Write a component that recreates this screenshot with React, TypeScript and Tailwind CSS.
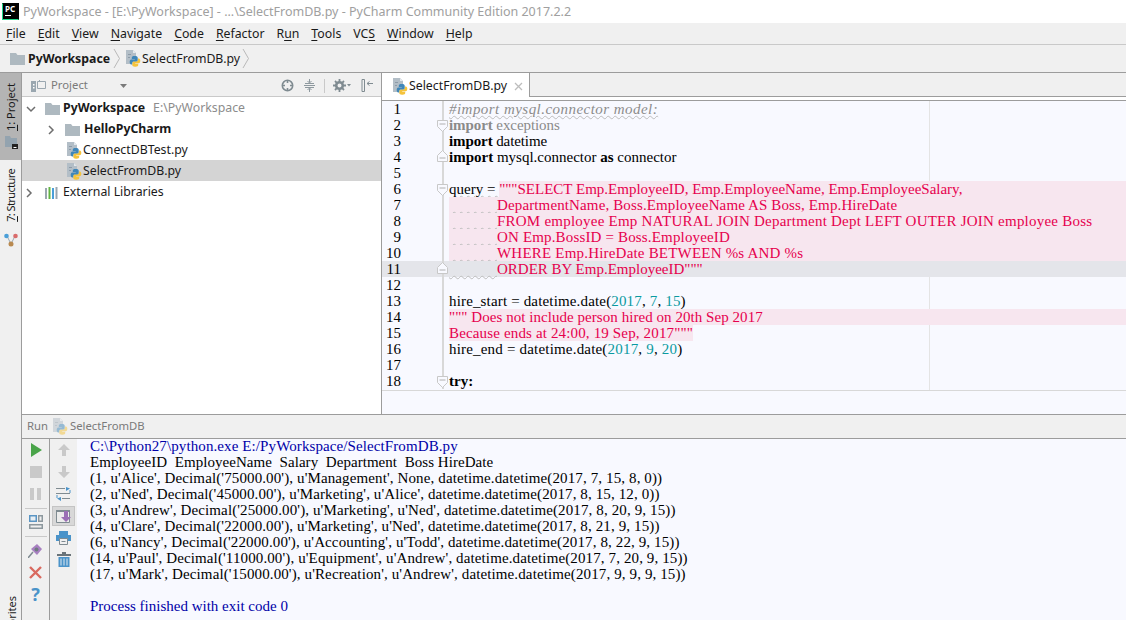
import type { ReactNode } from "react";

const ui = "font-['Noto_Sans','Open_Sans',sans-serif]";

const blueSnake =
  "M9.500 6C7.500 6 6.800 6.700 6.800 7.700V9h3v.6H6.300C5.200 9.600 4.700 10.500 4.700 12s.5 2.400 1.500 2.400h1V13c0-.9.700-1.500 1.500-1.500h2.600c.8 0 1.400-.6 1.400-1.400V7.700c0-1-1-1.700-2.700-1.700z";

function PyFile({ faded = false }: { faded?: boolean }) {
  return (
    <svg width="17" height="17" viewBox="0 0 17 17" className={`shrink-0 ${faded ? "opacity-50" : ""}`}>
      <path d="M1 0h7l3 3v7H7v4H1z" fill="#b3bec7" />
      <path d="M8 0v3h3z" fill="#e3e8ec" />
      <path d="M3 4h3v1H3zM3 7h2v1H3z" fill="#8d9ba8" />
      <path d={blueSnake} fill="#f5c33b" transform="rotate(180 10 11.400)" />
      <path d={blueSnake} fill="#3f86b8" />
    </svg>
  );
}

function Folder({ size = 14 }: { size?: number }) {
  return (
    <svg width={size + 1} height={size} viewBox="0 0 15 14" className="shrink-0">
      <path d="M0 1h6l1.500 2H15v10H0z" fill="#aeb9c0" />
    </svg>
  );
}

function Chevron({ open = false }: { open?: boolean }) {
  return (
    <svg width="10" height="10" viewBox="0 0 10 10" className="shrink-0">
      <path d={open ? "M1 3l4 4 4-4" : "M3 1l4 4-4 4"} fill="none" stroke="#6e6e6e" strokeWidth="1.500" />
    </svg>
  );
}

function Crumb() {
  return (
    <svg width="8" height="21" viewBox="0 0 8 21" className="shrink-0">
      <path d="M1 1l5.500 9.500L1 20" fill="none" stroke="#b9b9b9" />
    </svg>
  );
}

function Menu({ k, rest, lead = "" }: { k: string; rest: string; lead?: string }) {
  return (
    <span>
      {lead}
      <span className="underline underline-offset-2">{k}</span>
      {rest}
    </span>
  );
}

function TreeRow({ children, pad, active = false }: { children: ReactNode; pad: number; active?: boolean }) {
  return (
    <div
      className={`flex h-[21px] items-center pt-[2px] text-[12.3px] text-[#1a1a1a] ${active ? "bg-[#d4d4d4]" : ""}`}
      style={{ paddingLeft: pad }}
    >
      {children}
    </div>
  );
}

const sp = "underline decoration-wavy decoration-[#bdbdbd] decoration-1 whitespace-pre";

type Line = { bg?: string; node?: ReactNode; fold?: "open" | "close"; track?: string };

const red = "text-[#e6004d]";
const num = "text-[#0a9aa0]";
const pad = <span className={`${sp} tracking-[0.25px]`}>{"            "}</span>;

const lines: Line[] = [
  { track: "tracking-[0.46px]", node: <span className={`italic text-[#8c8c8c] ${sp}`}>#import mysql.connector model:</span> },
  { track: "tracking-[-0.08px]", fold: "open", node: <span className="text-[#8a8a8a]"><b>import</b> exceptions</span> },
  { track: "tracking-[-0.1px]", node: <span><b>import</b> datetime</span> },
  { fold: "close", node: <span><b>import</b> mysql.connector <b>as</b> connector</span> },
  {},
  {
    fold: "open",
    node: (
      <span className="flex">
        <span className={`whitespace-pre ${sp}`}>query = </span>
        <span className={`flex-1 bg-[#f7e6ef] ${red}`}>"""SELECT Emp.EmployeeID, Emp.EmployeeName, Emp.EmployeeSalary,</span>
      </span>
    ),
  },
  { track: "tracking-[0.13px]", bg: "bg-[#f7e6ef]", node: <span className={red}>{pad}DepartmentName, Boss.EmployeeName AS Boss, Emp.HireDate</span> },
  { track: "tracking-[0.23px]", bg: "bg-[#f7e6ef]", node: <span className={red}>{pad}FROM employee Emp NATURAL JOIN Department Dept LEFT OUTER JOIN employee Boss</span> },
  { track: "tracking-[0.16px]", bg: "bg-[#f7e6ef]", node: <span className={red}>{pad}ON Emp.BossID = Boss.EmployeeID</span> },
  { track: "tracking-[0.2px]", bg: "bg-[#f7e6ef]", node: <span className={red}>{pad}WHERE Emp.HireDate BETWEEN %s AND %s</span> },
  { fold: "close", node: <span className={red}>{pad}ORDER BY Emp.EmployeeID"""</span> },
  {},
  { track: "tracking-[0.16px]", node: <span>hire_start = datetime.date(<span className={num}>2017</span>, <span className={num}>7</span>, <span className={num}>15</span>)</span> },
  { track: "tracking-[0.05px]", bg: "bg-[#f7e6ef]", node: <span className={red}>""" Does not include person hired on 20th Sep 2017</span> },
  { track: "tracking-[0.15px]", node: <span className={`bg-[#f7e6ef] ${red}`}>Because ends at 24:00, 19 Sep, 2017"""</span> },
  { track: "tracking-[0.19px]", node: <span>hire_end = datetime.date(<span className={num}>2017</span>, <span className={num}>9</span>, <span className={num}>20</span>)</span> },
  {},
  { fold: "open", node: <b>try:</b> },
];

function Fold({ kind }: { kind: "open" | "close" }) {
  return (
    <svg
      width="11"
      height="15"
      viewBox="0 0 11 15"
      className={`absolute right-[-6px] ${kind === "open" ? "top-px" : "top-0"}`}
    >
      <path
        d={kind === "open" ? "M.5 2.500h10v6l-5 5-5-5z" : "M.5 12.500h10v-6l-5-5-5 5z"}
        fill="#f8f9ff"
        stroke="#c8c8c8"
      />
      <path d={kind === "open" ? "M2.500 6h6" : "M2.500 9h6"} stroke="#b0b0b0" />
    </svg>
  );
}

const output = [
  "EmployeeID  EmployeeName  Salary  Department  Boss HireDate",
  "(1, u'Alice', Decimal('75000.00'), u'Management', None, datetime.datetime(2017, 7, 15, 8, 0))",
  "(2, u'Ned', Decimal('45000.00'), u'Marketing', u'Alice', datetime.datetime(2017, 8, 15, 12, 0))",
  "(3, u'Andrew', Decimal('25000.00'), u'Marketing', u'Ned', datetime.datetime(2017, 8, 20, 9, 15))",
  "(4, u'Clare', Decimal('22000.00'), u'Marketing', u'Ned', datetime.datetime(2017, 8, 21, 9, 15))",
  "(6, u'Nancy', Decimal('22000.00'), u'Accounting', u'Todd', datetime.datetime(2017, 8, 22, 9, 15))",
  "(14, u'Paul', Decimal('11000.00'), u'Equipment', u'Andrew', datetime.datetime(2017, 7, 20, 9, 15))",
  "(17, u'Mark', Decimal('15000.00'), u'Recreation', u'Andrew', datetime.datetime(2017, 9, 9, 9, 15))",
];

export default function App() {
  return (
    <div className={`flex h-[620px] w-[1126px] flex-col overflow-hidden bg-[#f0f0f0] ${ui}`}>
      {/* title bar */}
      <div className="flex h-[23px] items-center gap-[4px] bg-white pl-[2px] text-[12.5px] text-[#a0a0a0]">
        <div className="flex h-[17px] w-[17px] flex-col border border-[#21d789] border-t-black border-r-black bg-black px-[2px]">
          <span className="text-[8px] leading-[9px] font-bold text-white">PC</span>
          <span className="mt-[2px] h-px w-[6px] bg-white" />
        </div>
        <span className="pt-[2px]">PyWorkspace - [E:\PyWorkspace] - ...\SelectFromDB.py - PyCharm Community Edition 2017.2.2</span>
      </div>
      {/* menu */}
      <div className="flex h-[22px] items-center gap-[12px] border-b border-[#c9c9c9] pl-[6px] pt-[2px] text-[12.3px] text-[#1a1a1a]">
        <Menu k="F" rest="ile" />
        <Menu k="E" rest="dit" />
        <Menu k="V" rest="iew" />
        <Menu k="N" rest="avigate" />
        <Menu k="C" rest="ode" />
        <Menu k="R" rest="efactor" />
        <Menu lead="R" k="u" rest="n" />
        <Menu k="T" rest="ools" />
        <Menu lead="VC" k="S" rest="" />
        <Menu k="W" rest="indow" />
        <Menu k="H" rest="elp" />
      </div>
      {/* nav bar */}
      <div className="flex h-[28px] items-center border-b border-[#9c9c9c] pl-[10px] text-[12.3px] text-[#1a1a1a]">
        <Folder />
        <b className="ml-[3px] mr-[3px] pt-[2px]">PyWorkspace</b>
        <Crumb />
        <span className="ml-[4px]"><PyFile /></span>
        <span className="mr-[2px] pt-[2px]">SelectFromDB.py</span>
        <Crumb />
      </div>

      <div className="flex min-h-0 flex-1">
        {/* left stripe */}
        <div className="relative w-[22px] shrink-0 border-r border-[#9c9c9c] pl-px text-[11px] text-[#1a1a1a]">
          <div className="-ml-px flex h-[87px] flex-col items-center justify-end gap-[5px] bg-[#b4b4b4] pb-[11px] pl-px">
            <span className="rotate-180 [writing-mode:vertical-rl]"><span className="underline">1</span>: Project</span>
            <svg width="13" height="13" viewBox="0 0 13 13" className="shrink-0">
              <path d="M0 0h5l1 2h6v9H0z" fill="#93a3af" />
              <path d="M7 8h6v5H7z" fill="#222" />
              <path d="M8.500 11h3v1h-3z" fill="#fff" />
            </svg>
          </div>
          <div className="flex flex-col items-center gap-[11px] pt-[9px]">
            <span className="rotate-180 tracking-[-0.6px] [writing-mode:vertical-rl]"><span className="underline">7</span>: Structure</span>
            <svg width="14" height="14" viewBox="0 0 14 14" className="shrink-0">
              <path d="M3 3l4 8 4-8" fill="none" stroke="#9aa7b0" />
              <circle cx="2.500" cy="3" r="2.300" fill="#4a9fd8" />
              <circle cx="11.500" cy="3" r="2.300" fill="#d96b6b" />
              <circle cx="7" cy="11" r="2.500" fill="#b98a50" />
            </svg>
          </div>
          <span className="absolute bottom-[-23px] left-[4px] rotate-180 [writing-mode:vertical-rl]">Favorites</span>
        </div>

        <div className="flex min-w-0 flex-1 flex-col">
          <div className="flex h-[342px] shrink-0 flex-col border-b border-[#9c9c9c]">
            <div className="flex min-h-0 flex-1">
              {/* project panel */}
              <div className="flex w-[360px] shrink-0 flex-col border-r border-[#9c9c9c] bg-white">
                <div className="flex h-[24px] shrink-0 items-center border-b border-[#c9c9c9] bg-[#f0f0f0] pl-[9px] pr-[7px] pt-[2px] text-[11.3px] text-[#7a7a7a]">
                  <svg width="15" height="14" viewBox="0 0 15 14">
                    <path d="M0 2h5v11H0z" fill="#9aa7b0" />
                    <path d="M2 5h1.500v1.500H2zM2 8h1.500v1.500H2z" fill="#fff" />
                    <path d="M6.500 2.500h8v7h-8z" fill="none" stroke="#9aa7b0" />
                    <path d="M8 1h1v2H8z" fill="#9aa7b0" />
                  </svg>
                  <span className="ml-[5px]">Project</span>
                  <svg width="7" height="4" viewBox="0 0 7 4" className="ml-[32px]"><path d="M0 0h7L3.500 4z" fill="#7a7a7a" /></svg>
                  <div className="ml-auto flex items-center">
                    <svg width="13" height="13" viewBox="0 0 13 13">
                      <circle cx="6.500" cy="6.500" r="5.200" fill="none" stroke="#7f8b91" strokeWidth="1.600" />
                      <path d="M6.500 1v3M6.500 9v3M1 6.500h3M9 6.500h3" stroke="#7f8b91" strokeWidth="1.600" />
                    </svg>
                    <svg width="13" height="13" viewBox="0 0 13 13" className="ml-[9px]">
                      <path d="M1 6.500h11M6.500 0v3.500M6.500 13V9.500M4.500 2l2 2 2-2M4.500 11l2-2 2 2M2 4.500h9M2 8.500h9" fill="none" stroke="#8d989e" />
                    </svg>
                    <div className="ml-[8px] h-[14px] w-px bg-[#c9c9c9]" />
                    <svg width="18" height="13" viewBox="0 0 18 13" className="ml-[8px]">
                      <circle cx="6.500" cy="6.500" r="3.300" fill="none" stroke="#7f8b91" strokeWidth="2.600" />
                      <path d="M6.500 0v2.500M6.500 10.500V13M0 6.500h2.500M10.500 6.500H13M2 2l1.800 1.800M9.200 9.200L11 11M11 2L9.200 3.800M3.800 9.200L2 11" stroke="#7f8b91" strokeWidth="1.800" />
                      <path d="M14 5h4l-2 2.500z" fill="#7f8b91" />
                    </svg>
                    <svg width="13" height="13" viewBox="0 0 13 13" className="ml-[10px]">
                      <path d="M1 .5h2.500v12H1z" fill="none" stroke="#7f8b91" />
                      <path d="M6 4.500h6M6 4.500l2.500-2M6 4.500l2.500 2" fill="none" stroke="#7f8b91" />
                    </svg>
                  </div>
                </div>
                <div>
                  <TreeRow pad={4}>
                    <Chevron open />
                    <span className="ml-[9px]"><Folder /></span>
                    <b className="ml-[3px]">PyWorkspace</b>
                    <span className="ml-[8px] text-[#8c8c8c]">E:\PyWorkspace</span>
                  </TreeRow>
                  <TreeRow pad={24}>
                    <Chevron />
                    <span className="ml-[9px]"><Folder /></span>
                    <b className="ml-[4px]">HelloPyCharm</b>
                  </TreeRow>
                  <TreeRow pad={44}>
                    <PyFile />
                    <span>ConnectDBTest.py</span>
                  </TreeRow>
                  <TreeRow pad={44} active>
                    <PyFile />
                    <span>SelectFromDB.py</span>
                  </TreeRow>
                  <TreeRow pad={2}>
                    <Chevron />
                    <svg width="15" height="12" viewBox="0 0 15 12" className="ml-[11px]">
                      <path d="M0 1h2v11H0z" fill="#9aa7b0" />
                      <path d="M3.500 0h2v12h-2z" fill="#62b543" />
                      <path d="M7 1h2v11H7z" fill="#4a9fd8" />
                      <path d="M10.500 0h2v12h-2z" fill="#9aa7b0" />
                    </svg>
                    <span className="ml-[3px]">External Libraries</span>
                  </TreeRow>
                </div>
              </div>

              {/* editor */}
              <div className="flex min-w-0 flex-1 flex-col">
                <div className="flex h-[24px] shrink-0 border-b border-[#9c9c9c] bg-[#f0f0f0]">
                  <div className="flex h-[24px] w-[148px] items-center border-r border-[#9c9c9c] bg-white pl-[10px] pt-[2px] text-[12.3px] text-[#1a1a1a]">
                    <PyFile />
                    <span>SelectFromDB.py</span>
                    <svg width="9" height="9" viewBox="0 0 9 9" className="ml-[7px]">
                      <path d="M1 1l7 7M8 1l-7 7" stroke="#bdbdbd" strokeWidth="1.300" />
                    </svg>
                  </div>
                </div>
                <div className="h-[4px] shrink-0 border-b border-[#9c9c9c] bg-white" />
                <div className="relative min-h-0 flex-1 overflow-hidden bg-[#f8f9ff] font-['Liberation_Serif',serif] text-[15px] leading-[16px] text-black">
                  <div className="absolute bottom-0 left-[547px] top-0 w-px bg-[#e4e4e4]" />
                  {lines.map((l, i) => (
                    <div key={i} className={`relative flex h-[16px] ${i === 10 ? "bg-[#e4e5ea]" : ""}`}>
                      <div className="w-[19px] shrink-0 text-right">{i + 1}</div>
                      <div className="relative w-[43px] shrink-0 border-r-2 border-[#d8d8d8]">
                        {l.fold && <Fold kind={l.fold} />}
                      </div>
                      <div className={`ml-[5px] min-w-0 flex-1 whitespace-pre ${l.bg ?? ""} ${l.track ?? ""}`}>{l.node}</div>
                    </div>
                  ))}
                </div>
                <div className="h-[24px] shrink-0 border-t border-[#d8d8d8] bg-[#f8f9ff]" />
              </div>
            </div>
          </div>

          {/* run panel */}
          <div className="flex h-[24px] shrink-0 items-center border-b border-[#9c9c9c] pl-[5px] text-[11.3px] text-[#7a7a7a]">
            <span>Run</span>
            <span className="ml-[4px]"><PyFile faded /></span>
            <span className="ml-[1px]">SelectFromDB</span>
          </div>
          <div className="flex min-h-0 flex-1">
            <div className="flex w-[28px] shrink-0 flex-col items-center border-r border-[#9c9c9c] pt-[4px]">
              <svg width="12" height="14" viewBox="0 0 12 14"><path d="M1 0l11 7-11 7z" fill="#4aa54a" /></svg>
              <div className="mt-[9px] h-[12px] w-[12px] bg-[#c9c9c9]" />
              <div className="mt-[10px] flex gap-[3px]"><div className="h-[12px] w-[4px] bg-[#c9c9c9]" /><div className="h-[12px] w-[4px] bg-[#c9c9c9]" /></div>
              <div className="mt-[8px] h-px w-[22px] bg-[#c9c9c9]" />
              <svg width="14" height="15" viewBox="0 0 14 15" className="mt-[5px]">
                <path d="M0 1h8v7H0z" fill="#5a95c4" /><path d="M1.500 2.500h5v4h-5z" fill="#e8eef3" /><path d="M9 1h5v7H9zM0 10h14v5H0z" fill="#8d989e" /><path d="M1.500 11.500h11v2h-11zM10.500 2.500h2v4h-2z" fill="#f0f0f0" />
              </svg>
              <div className="mt-[7px] h-px w-[22px] bg-[#c9c9c9]" />
              <svg width="15" height="15" viewBox="0 0 15 15" className="mt-[6px]">
                <path d="M0 15l5-6" stroke="#7f8b91" strokeWidth="1.500" />
                <path d="M3 6l6-5 5 5-5 6z" fill="#a77fc0" />
                <circle cx="8.500" cy="6.500" r="2" fill="#6f7a80" />
              </svg>
              <svg width="13" height="13" viewBox="0 0 13 13" className="mt-[8px]"><path d="M1 1l11 11M12 1L1 12" stroke="#d9695f" strokeWidth="2.400" /></svg>
              <span className="mt-[5px] text-[18px] leading-[20px] font-bold text-[#4a93c9]">?</span>
            </div>
            <div className="flex w-[27px] shrink-0 flex-col items-center pt-[5px]">
              <svg width="12" height="12" viewBox="0 0 12 12"><path d="M6 0l6 6H8v6H4V6H0z" fill="#c9c9c9" /></svg>
              <svg width="12" height="12" viewBox="0 0 12 12" className="mt-[10px]"><path d="M6 12l6-6H8V0H4v6H0z" fill="#c9c9c9" /></svg>
              <svg width="15" height="15" viewBox="0 0 15 15" className="mt-[8px]">
                <path d="M0 2.500h9M0 7.500h14M6 12.500h8" stroke="#7f8b91" /><path d="M10 1l4 1.500L10 5zM5 11l-4 1.500L5 15z" fill="#4a93c9" /><path d="M14 4v3M1 9v3" stroke="#4a93c9" />
              </svg>
              <div className="mt-[5px] flex h-[20px] w-[23px] items-center justify-center border border-[#c4c4c4] bg-[#d8d8d8]">
                <svg width="15" height="14" viewBox="0 0 15 14">
                  <path d="M.5 1.500h13v12H.5z" fill="#ececec" stroke="#7f8b91" /><path d="M0 1h14v2H0z" fill="#7f8b91" /><path d="M8 2h4v6h3l-5 5-5-5h3z" fill="#9a6fb5" />
                </svg>
              </div>
              <svg width="15" height="14" viewBox="0 0 15 14" className="mt-[5px]">
                <path d="M3 0h9v4H3zM0 4h15v6H0z" fill="#4a93c9" /><path d="M3.500 7.500h8v6h-8z" fill="#f0f0f0" stroke="#7f8b91" /><path d="M5.500 10.500h4" stroke="#7f8b91" />
              </svg>
              <svg width="14" height="15" viewBox="0 0 14 15" className="mt-[7px]">
                <path d="M0 2h14v2H0zM5 0h4v2H5z" fill="#6a747a" /><path d="M1.500 5h11v10h-11z" fill="#4a93c9" /><path d="M4 6.500v7M7 6.500v7M10 6.500v7" stroke="#dfeaf2" />
              </svg>
            </div>
            <div className="min-w-0 flex-1 overflow-hidden whitespace-pre bg-[#f8f9ff] pl-[13px] font-['Liberation_Serif',serif] text-[15px] leading-[16px] tracking-[0.12px] text-black">
              <div className="-mt-px tracking-[0.1px] text-[#0000a8]">C:\Python27\python.exe E:/PyWorkspace/SelectFromDB.py</div>
              <div className="tracking-[0.05px]">{output[0]}</div>
              {output.slice(1).map((t) => (
                <div key={t}>{t}</div>
              ))}
              <div className="h-[16px]" />
              <div className="tracking-normal text-[#0000a8]">Process finished with exit code 0</div>
            </div>
          </div>
        </div>
      </div>
    </div>
  );
}
